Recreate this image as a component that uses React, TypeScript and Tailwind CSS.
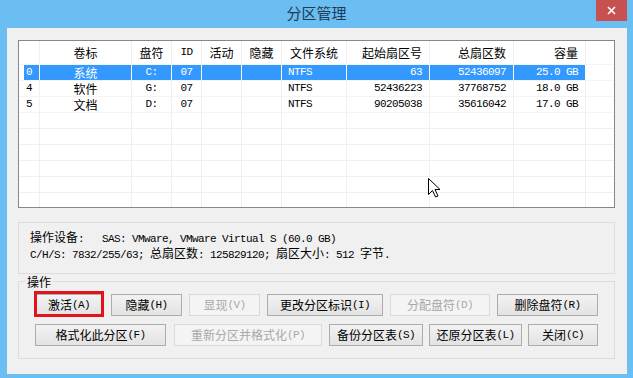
import React from 'react';

// SimSun-ish look: CJK runs at 12px, latin runs in a 6px-wide mono
const Mix = ({ s }: { s: string }) => (
    <>
        {s.split(/([\u3000-\u303f\u4e00-\u9fff\uff00-\uffef]+)/).filter(Boolean).map((p, i) =>
            /[\u3000-\u303f\u4e00-\u9fff\uff00-\uffef]/.test(p) ? (
                <span key={i} className="font-['Noto_Sans_CJK_SC'] text-[12px]">{p}</span>
            ) : (
                <span key={i} className="font-['Liberation_Mono'] text-[11px] tracking-[-0.6px]">{p}</span>
            )
        )}
    </>
);

const cols = [
    { w: 'w-[16px]', head: '', align: 'justify-start pl-[2px]', headAlign: 'justify-start' },
    { w: 'w-[92px]', head: '卷标', align: 'justify-center', headAlign: 'justify-center' },
    { w: 'w-[40px]', head: '盘符', align: 'justify-center', headAlign: 'justify-center' },
    { w: 'w-[30px]', head: 'ID', align: 'justify-center', headAlign: 'justify-center' },
    { w: 'w-[40px]', head: '活动', align: 'justify-center', headAlign: 'justify-center' },
    { w: 'w-[40px]', head: '隐藏', align: 'justify-center', headAlign: 'justify-center' },
    { w: 'w-[65px]', head: '文件系统', align: 'justify-start pl-[6px]', headAlign: 'justify-center' },
    { w: 'w-[83px]', head: '起始扇区号', align: 'justify-end pr-[7px]', headAlign: 'justify-end pr-[7px]' },
    { w: 'w-[84px]', head: '总扇区数', align: 'justify-end pr-[7px]', headAlign: 'justify-end pr-[7px]' },
    { w: 'w-[72px]', head: '容量', align: 'justify-end pr-[7px]', headAlign: 'justify-end pr-[7px]' },
];

const rows = [
    ['0', '系统', 'C:', '07', '', '', 'NTFS', '63', '52436097', '25.0 GB'],
    ['4', '软件', 'G:', '07', '', '', 'NTFS', '52436223', '37768752', '18.0 GB'],
    ['5', '文档', 'D:', '07', '', '', 'NTFS', '90205038', '35616042', '17.0 GB'],
];

const Btn = ({ label, w, disabled }: { label: string; w: string; disabled?: boolean }) => (
    <div
        className={
            disabled
                ? `${w} h-[22px] flex items-center justify-center border border-[#d9d9d9] bg-[#f4f4f4] text-[#a8a8a8]`
                : `${w} h-[22px] flex items-center justify-center border border-[#acacac] bg-linear-to-b from-[#f2f2f2] to-[#e3e3e3] text-black`
        }
    >
        <Mix s={label} />
    </div>
);

const App = () => {
    return (
        <div className="w-[633px] h-[378px] bg-[#6abef2] flex flex-col overflow-hidden">
            {/* title bar */}
            <div className="h-[28px] flex items-start">
                <div className="w-[37px]" />
                <div className="flex-1 h-[26px] flex items-center justify-center font-['Noto_Sans_CJK_SC'] text-[15px] text-[#1f3a52]">
                    分区管理
                </div>
                <div className="w-[37px]">
                    <div className="w-[31px] h-[21px] bg-[#c75050] flex items-center justify-center">
                        <svg width="9" height="9" viewBox="0 0 9 9">
                            <path d="M1 1L8 8M8 1L1 8" stroke="#fff" strokeWidth="1.6" />
                        </svg>
                    </div>
                </div>
            </div>

            {/* client area */}
            <div className="ml-[7px] w-[620px] h-[346px] bg-[#f0f0f0] flex flex-col text-black">
                {/* partition list */}
                <div className="relative mt-[12px] ml-[11px] w-[597px] h-[168px] border border-[#828790] bg-white overflow-hidden">
                    <div className="flex h-[24px] border-b border-[#f4f4f4]">
                        <div className="w-[5px]" />
                        {cols.map((c, i) => (
                            <div key={i} className={`${c.w} h-full flex items-center border-r border-[#f0f0f0] ${c.headAlign}`}>
                                <Mix s={c.head} />
                            </div>
                        ))}
                    </div>
                    {rows.map((r, ri) => (
                        <div key={ri} className="flex h-[16px] border-b border-[#f4f4f4]">
                            <div className="w-[5px]" />
                            {cols.map((c, i) => (
                                <div
                                    key={i}
                                    className={
                                        ri === 0
                                            ? `${c.w} h-full flex items-center border-r border-white bg-[#3399ff] text-white ${c.align}`
                                            : `${c.w} h-full flex items-center border-r border-[#f0f0f0] ${c.align}`
                                    }
                                >
                                    <Mix s={r[i]} />
                                </div>
                            ))}
                        </div>
                    ))}
                    {[0, 1, 2, 3, 4, 5].map((k) => (
                        <div key={k} className="flex h-[16px] border-b border-[#f0f0f0]">
                            <div className="w-[5px]" />
                            {cols.map((c, i) => (
                                <div key={i} className={`${c.w} h-full border-r border-[#f0f0f0]`} />
                            ))}
                        </div>
                    ))}
                    {/* mouse pointer */}
                    <svg className="absolute left-[409px] top-[137px]" width="13" height="20" viewBox="0 0 13 20">
                        <path d="M0.5 0.5V16.5L4.5 12.5L7.5 19L10 18L7 11.5H12Z" fill="#fff" stroke="#000" strokeWidth="1" strokeLinejoin="round" />
                    </svg>
                </div>

                {/* device info */}
                <div className="mt-[14px] ml-[11px] w-[597px] h-[52px] border border-[#dcdcdc] pl-[11px] pt-[7px] leading-[13px] whitespace-pre">
                    <div><Mix s="操作设备:   SAS: VMware, VMware Virtual S (60.0 GB)" /></div>
                    <div><Mix s="C/H/S: 7832/255/63; 总扇区数: 125829120; 扇区大小: 512 字节." /></div>
                </div>

                {/* operations */}
                <fieldset className="-mt-[1px] ml-[11px] w-[597px] border border-[#dcdcdc] pb-[12px]">
                    <legend className="ml-[6px] px-[2px] leading-[16px]">
                        <Mix s="操作" />
                    </legend>
                    <div className="mt-[4px] pl-[15px] flex gap-[7px]">
                        <div className="relative">
                            <Btn label="激活(A)" w="w-[70px]" />
                            <div className="absolute -top-[3px] -bottom-[1px] left-0 right-0 border-[3px] border-[#e3131b]" />
                        </div>
                        <Btn label="隐藏(H)" w="w-[71px]" />
                        <Btn label="显现(V)" w="w-[71px]" disabled />
                        <Btn label="更改分区标识(I)" w="w-[116px]" />
                        <Btn label="分配盘符(D)" w="w-[100px]" disabled />
                        <Btn label="删除盘符(R)" w="w-[101px]" />
                    </div>
                    <div className="mt-[8px] pl-[16px] flex">
                        <Btn label="格式化此分区(F)" w="w-[131px]" />
                        <div className="ml-[8px]"><Btn label="重新分区并格式化(P)" w="w-[148px]" disabled /></div>
                        <div className="ml-[7px]"><Btn label="备份分区表(S)" w="w-[94px]" /></div>
                        <div className="ml-[6px]"><Btn label="还原分区表(L)" w="w-[93px]" /></div>
                        <div className="ml-[6px]"><Btn label="关闭(C)" w="w-[70px]" /></div>
                    </div>
                </fieldset>
            </div>
        </div>
    );
};

export default App;
